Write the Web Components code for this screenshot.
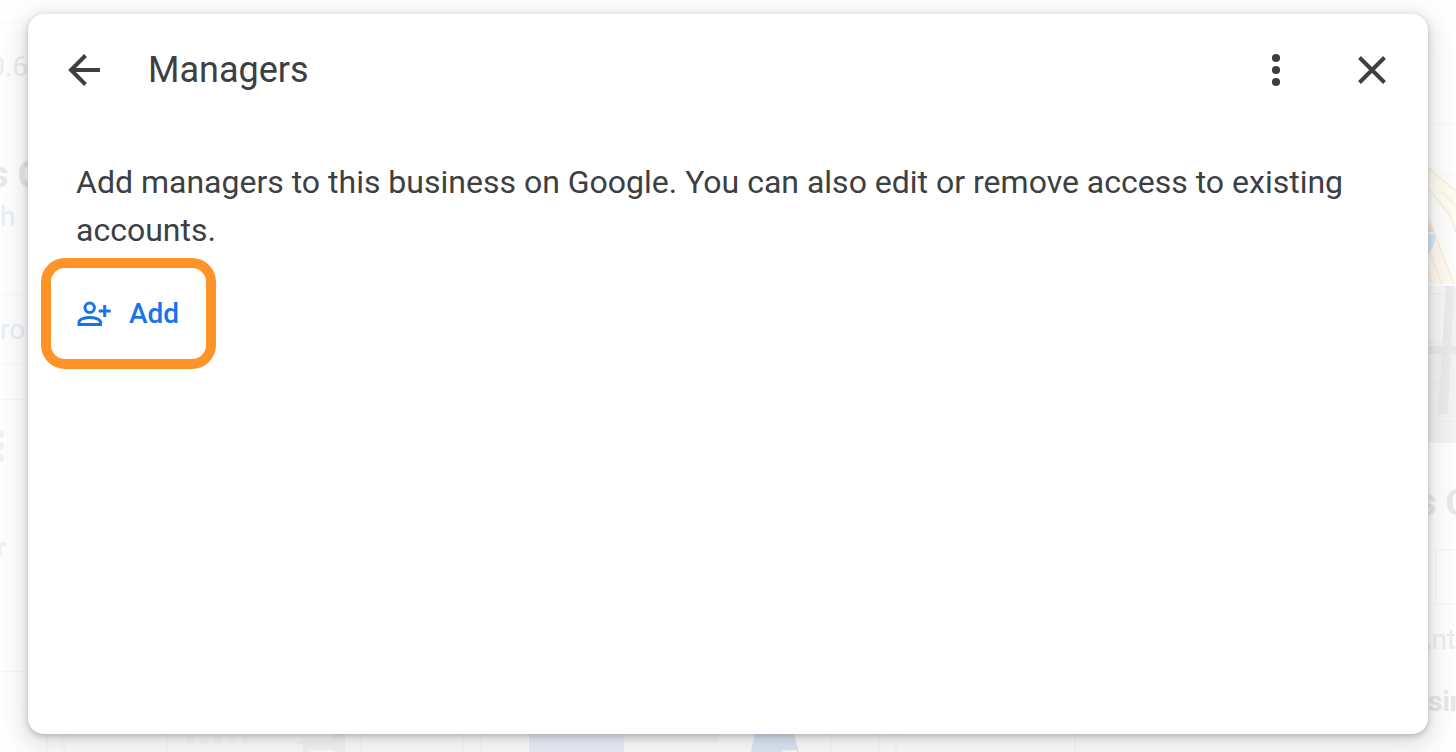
<!DOCTYPE html>
<html lang="en">
<head>
<meta charset="utf-8">
<title>Managers</title>
<style>
  html, body { margin: 0; min-height: 100%; }
  body { background: #fefefe; font-family: Roboto, "Liberation Sans", sans-serif; color: #3c4043; }
</style>
</head>
<body>
<managers-page></managers-page>

<template id="tpl-page">
  <style>
    :host { display: grid; min-height: 100vh; overflow: hidden; }
    faded-page, .stage { grid-area: 1 / 1; min-width: 0; }
    .stage { display: grid; padding: 14px 28px 18px; position: relative; }
  </style>
  <faded-page aria-hidden="true"></faded-page>
  <div class="stage">
    <modal-card heading="Managers">
      <p slot="intro">Add managers to this business on Google. You can also edit or remove access to existing accounts.</p>
      <highlight-frame slot="actions"><add-button>Add</add-button></highlight-frame>
    </modal-card>
  </div>
</template>

<template id="tpl-card">
  <style>
    :host { display: flex; flex-direction: column; background: #fff; border-radius: 16px;
      box-shadow: 0 8px 24px 4px rgba(60,64,67,.16), 0 2px 6px rgba(60,64,67,.3); }
    header { display: flex; align-items: center; height: 112px; padding: 0 32px; gap: 40px; }
    h1 { flex: 1; margin: 0; font: 400 36px/48px Roboto, sans-serif; }
    .body { display: flex; flex-direction: column; align-items: flex-start; gap: 4px; padding: 32px 13px; }
    ::slotted(p) { margin: 0 32px 0 35px; font-size: 32px; line-height: 48px; }
  </style>
  <header>
    <icon-button label="Back"><svg width="48" height="48" viewBox="0 0 48 48" fill="none" stroke="currentColor" stroke-width="4"><path d="M40 24H11M25.500 9.500 11 24l14.500 14.500" stroke-linejoin="miter"/></svg></icon-button>
    <h1></h1>
    <icon-button label="More options"><svg width="48" height="48" viewBox="0 0 48 48" fill="currentColor"><circle cx="24" cy="12" r="4.100"/><circle cx="24" cy="24" r="4.100"/><circle cx="24" cy="36" r="4.100"/></svg></icon-button>
    <icon-button label="Close"><svg width="48" height="48" viewBox="0 0 48 48" fill="none" stroke="currentColor" stroke-width="4"><path d="m11.500 11.500 25 25m0-25-25 25"/></svg></icon-button>
  </header>
  <div class="body"><slot name="intro"></slot><slot name="actions"></slot></div>
</template>

<template id="tpl-icon">
  <style>
    :host { display: inline-flex; }
    button { display: flex; padding: 0; border: 0; background: none; color: #3c4043; border-radius: 24px; cursor: pointer; }
    :host([label="More options"]) { margin-right: 8px; }
  </style>
  <button type="button"><slot></slot></button>
</template>

<template id="tpl-frame">
  <style>:host { display: flex; border: 10px solid #ff9328; border-radius: 24px; }</style>
  <slot></slot>
</template>

<template id="tpl-add">
  <style>
    :host { display: flex; }
    button { display: flex; align-items: center; gap: 18px; height: 91px; min-width: 155px; padding: 0 24px 0 26px; border: 0; background: none; color: #1a73e8; font: 500 28px/40px Roboto, sans-serif; cursor: pointer; }
  </style>
  <button type="button">
    <svg width="34" height="26" viewBox="0 0 34 26" fill="none" stroke="currentColor" stroke-width="3" aria-hidden="true">
      <circle cx="12.700" cy="6.800" r="4.700"/>
      <path d="M2 23.500h21.500v-2.200c0-3.200-6.500-4.800-10.800-4.800S2 18.100 2 21.300z"/>
      <path d="M21.700 10h12M27.700 4v12"/>
    </svg>
    <slot></slot>
  </button>
</template>

<template id="tpl-faded">
  <style>
    :host { display: grid; grid-template-columns: 28px 1fr 28px; grid-template-rows: 1fr 18px; overflow: hidden; color: #ececec; }
    .col { display: grid; align-content: start; font-size: 28px; line-height: 32px; white-space: nowrap; }
    .col > * { display: flex; align-items: center; box-sizing: border-box; min-width: 0; }
    .left { grid-template-columns: 28px; grid-template-rows: 23px 88px 40px 48px 35px 61px 70px 35px 92px 112px 68px; }
    .left > * { justify-content: flex-end; }
    .left .start { justify-content: flex-start; }
    .right { grid-column: 3; grid-template-columns: 28px; grid-template-rows: 124px 43px 117px 2px 157px 30px 60px 16px 56px 70px 54px; }
    .rule { border-bottom: 1px solid #f7f7f7; }
    .big { font-size: 36px; font-weight: 700; color: #e7e8e8; margin-right: -13px; }
    .blue { color: #e6eefb; }
    .bold { font-weight: 700; color: #e7e8e8; }
    .left .bold { color: #f0f1f1; margin-left: -4px; }
    .box { border: 2px solid #f9f9f9; margin-left: 7px; border-right: 0; }
    .out { justify-content: flex-end; }
    .bottom { grid-column: 1 / -1; width: 100%; height: 18px; }
    svg { display: block; flex: none; }
  </style>
  <div class="col left">
    <div class="rule"></div><div>0.6</div><div></div>
    <div class="big">s C</div><div class="blue start">h</div>
    <div class="rule"></div><div class="blue rule start">ro</div><div class="rule"></div>
    <div class="start"><svg width="8" height="32" viewBox="0 0 8 32" fill="#f0f1f1"><circle cy="4" r="4"/><circle cy="16" r="4"/><circle cy="28" r="4"/></svg></div>
    <div class="bold start">r</div><div class="rule"></div>
  </div>
  <div class="col right">
    <div class="rule"></div><div></div>
    <svg width="28" height="117" viewBox="0 0 28 117">
      <path fill="#fdfdfd" d="M0 0h28v117H0z"/>
      <path d="M0 0 28 23v38L14 32 0 17z" fill="#fefbf3"/>
      <path d="M0 52 26 117H0z" fill="#fefaf0"/>
      <path d="M0 1 28 24M0 21l21 26 7 18M13 25l15 14M0 50l26 67M0 81l14 36M0 104l4 13" fill="none" stroke="#fcf1dc" stroke-width="2"/>
      <path d="M13 0h15v5H13z" fill="#fff"/>
      <path d="M0 56q5 3 6 9H0z" fill="#f4dfdd"/>
      <path d="M0 67h7q1 12-7 20z" fill="#dbe5f4"/>
    </svg>
    <div></div>
    <svg width="28" height="157" viewBox="0 0 28 157">
      <path fill="#f3f2f2" d="M0 0h28v157H0z"/>
      <path d="M0 0h17l-2 59-15-4z" fill="#f5f7f7"/>
      <path d="M0 8h28M0 54l15 4" stroke="#ebeded"/>
      <path d="M18 0h8l-6 128H10z" fill="#ebeaea"/>
      <path d="M0 60h28v8H0z" fill="#eae9e9"/>
      <path d="M0 97h28M0 135h28" stroke="#ecebea"/>
    </svg>
    <div></div><div class="big out">s C</div><div></div><div class="box"></div>
    <div class="out">Ant</div><div class="bold">sin</div>
  </div>
  <svg class="bottom" viewBox="0 0 1456 18" preserveAspectRatio="none" aria-hidden="true">
    <path d="M47 0v18M64 0v18M167 0v18M361 0v18M463 0v18M481 0v18M831 0v18M879 0v18M896 0v18M1075 0v18" stroke="#fafafa" stroke-width="2"/>
    <path d="M333 0h12v18h-42v-8h-7l4-4h31z" fill="#f6f6f6"/>
    <path d="M310 16h24v2h-24z" fill="#fff"/>
    <path d="M529 0h95v18h-95z" fill="#edf0fa"/>
    <path d="M624 0h95v8h-95z" fill="#f7f7fb"/>
    <path d="M755 0h39l5 18h-48z" fill="#dde7f7"/>
    <path d="M783 16h14v2h-14z" fill="#fafafa"/>
    <path d="M186 7h62" stroke="#fafafa" stroke-width="6" stroke-dasharray="8 6"/>
  </svg>
</template>

<script>
  const define = (name, id, init) => customElements.define(name, class extends HTMLElement {
    constructor() {
      super();
      this.attachShadow({ mode: "open" }).append(document.getElementById(id).content.cloneNode(true));
    }
    connectedCallback() { if (init) init(this); }
  });
  define("faded-page", "tpl-faded");
  define("icon-button", "tpl-icon", el => el.shadowRoot.querySelector("button").setAttribute("aria-label", el.getAttribute("label")));
  define("highlight-frame", "tpl-frame");
  define("add-button", "tpl-add");
  define("modal-card", "tpl-card", el => {
    el.setAttribute("role", "dialog");
    el.setAttribute("aria-label", el.getAttribute("heading"));
    el.shadowRoot.querySelector("h1").textContent = el.getAttribute("heading");
  });
  define("managers-page", "tpl-page");
</script>
</body>
</html>
